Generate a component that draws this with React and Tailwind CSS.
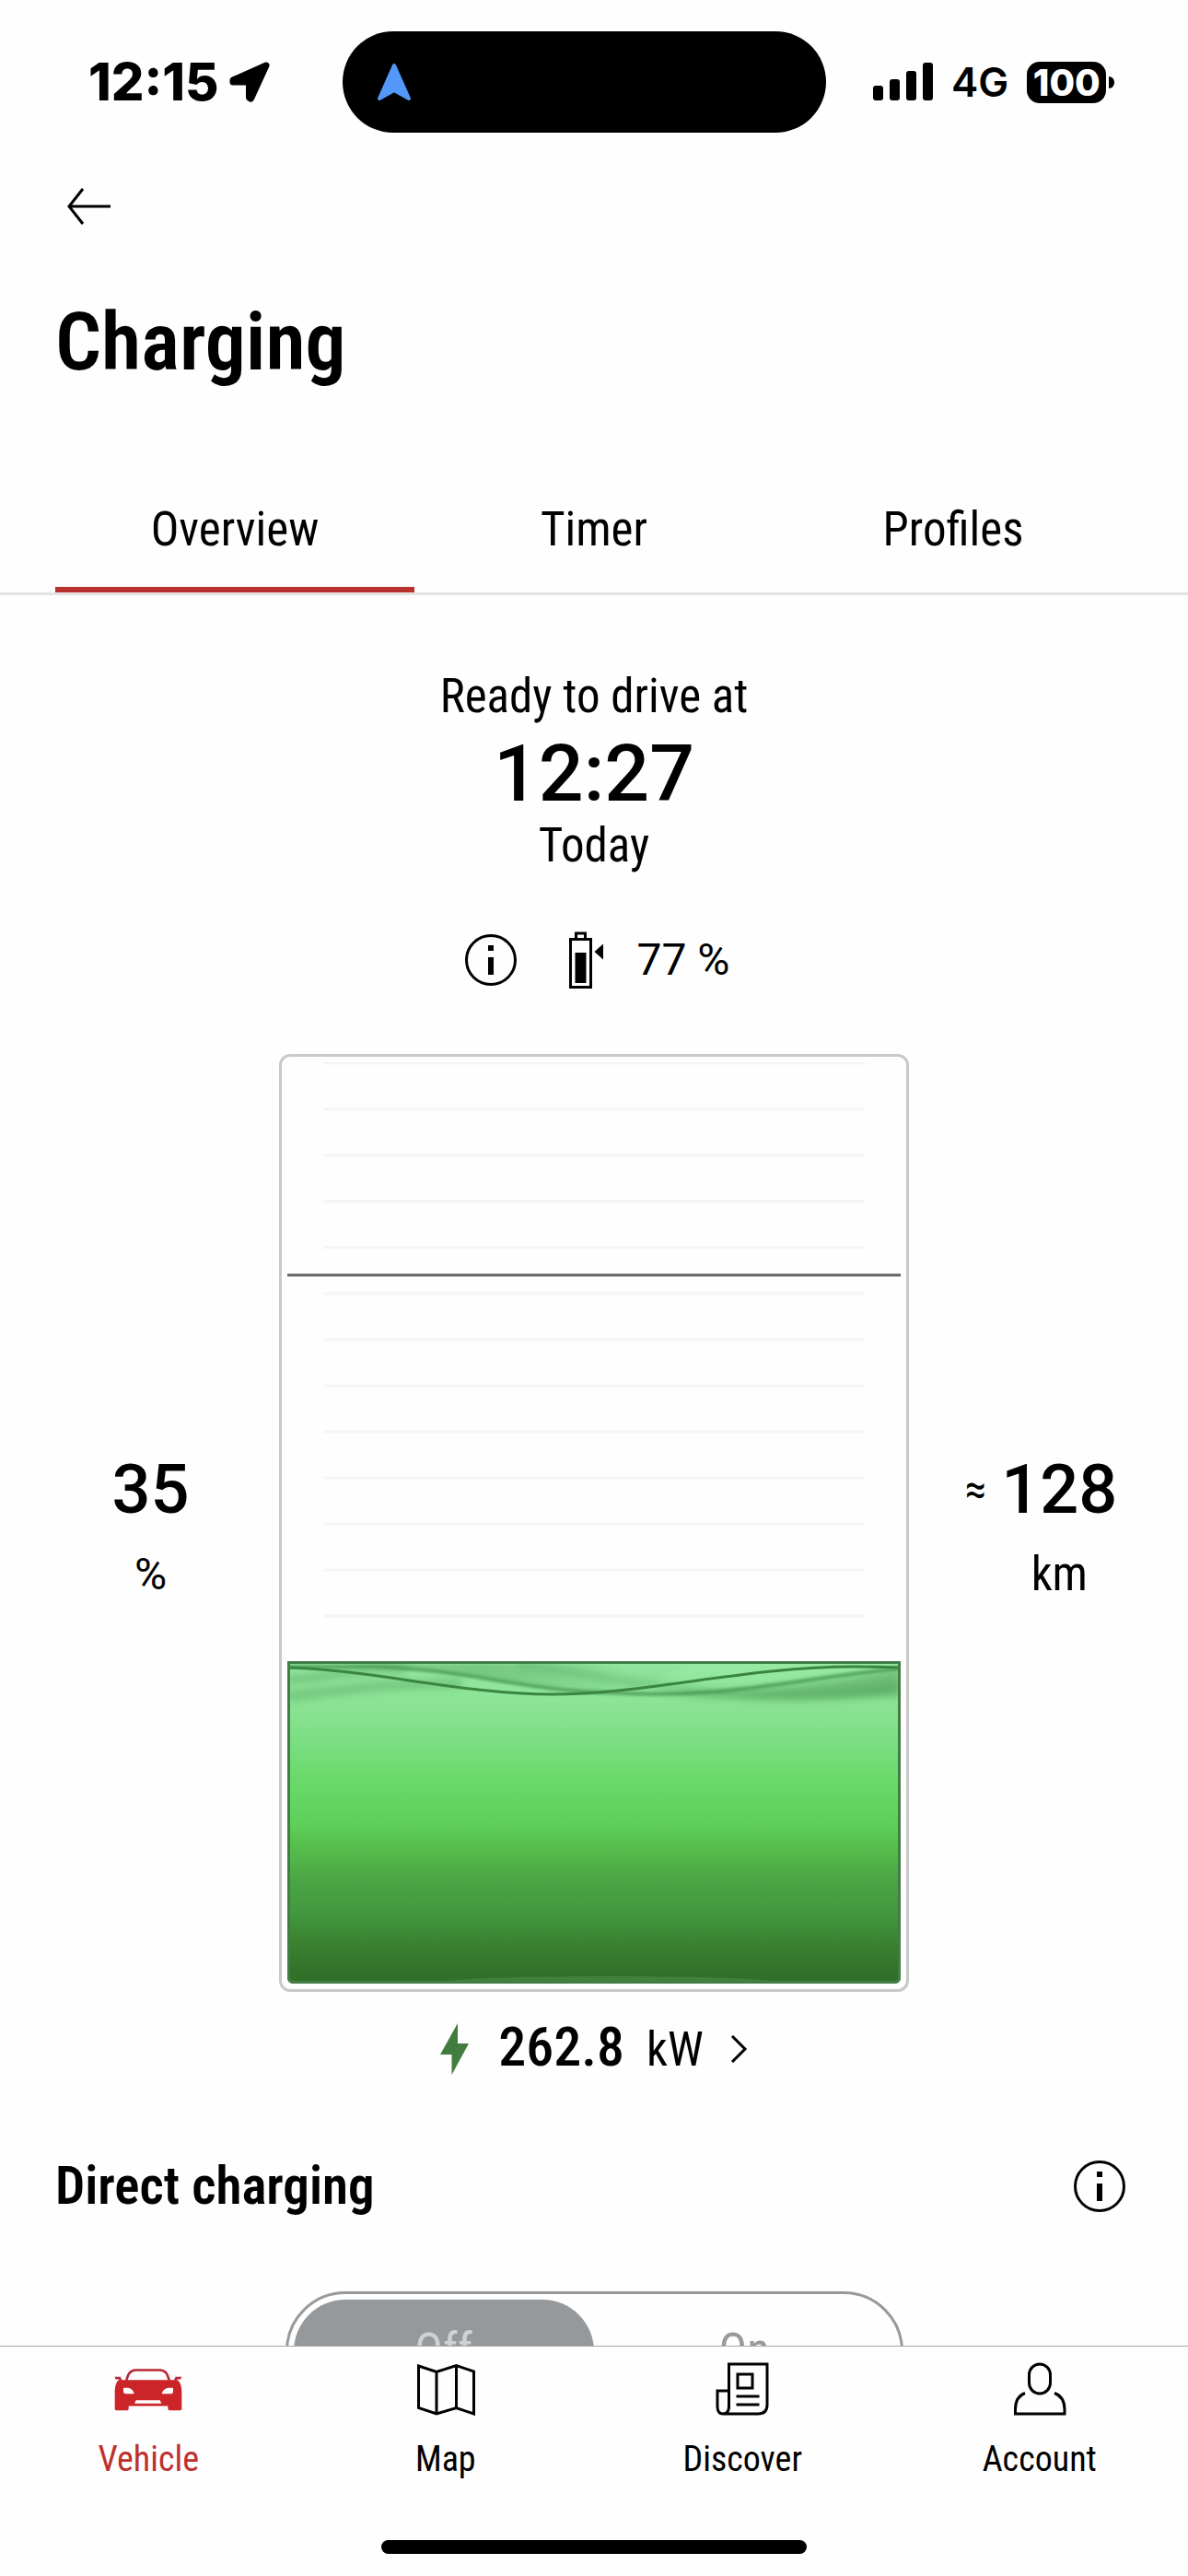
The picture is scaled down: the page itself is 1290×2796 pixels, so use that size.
import React, { useState } from 'react';

const TABS = ['Overview', 'Timer', 'Profiles'];

const NAV_ITEMS = [
  { label: 'Vehicle', Icon: CarIcon },
  { label: 'Map', Icon: MapIcon },
  { label: 'Discover', Icon: NewsIcon },
  { label: 'Account', Icon: UserIcon },
];

function CarIcon() {
  return (
    <svg viewBox="46 45 222 140" className="w-[74px] h-[47px]" aria-hidden="true">
      <path d="M86 86C91 62 99 53 116 52H195C212 53 220 62 225 86" fill="none" stroke="#b52a35" strokeWidth="8" />
      <path d="M48 74H66L72 86H64L61 82H50ZM266 74H246L240 86H248L252 82H262Z" fill="#b52a35" />
      <path
        fillRule="evenodd"
        fill="#cb2529"
        d="M60 84H252C262 92 266 105 266 125V178Q266 183 261 183H227Q221 183 221 178V169H93V178Q93 183 88 183H53Q48 183 48 178V125C48 105 52 92 60 84ZM76 110H92Q106 112 111 129H82Q76 129 76 122ZM238 110H222Q206 112 201 129H232Q238 129 238 122ZM117 150H195L200 161H112Z"
      />
    </svg>
  );
}

function MapIcon() {
  return (
    <svg viewBox="0 0 64 58" className="w-16 h-[58px]" fill="none" stroke="currentColor" strokeWidth="3" aria-hidden="true">
      <path d="M2.5 4L22 10.5L43.5 3.5L62.5 10V56L43.5 49.5L22 56L2.5 49.5ZM22 10.5V56M43.5 3.5V49.5" />
    </svg>
  );
}

function NewsIcon() {
  return (
    <svg viewBox="0 0 60 60" className="w-[60px] h-[60px]" fill="none" stroke="currentColor" strokeWidth="3" aria-hidden="true">
      <path d="M15.5 51V3H57V47Q57 57 47 57H9Q3 57 3 49V32H15.5M9 57Q15.5 57 15.5 49" />
      <rect x="25" y="14" width="16" height="15" />
      <path d="M23.5 38H48.5M23.5 47H48.5" />
    </svg>
  );
}

function UserIcon() {
  return (
    <svg viewBox="0 0 60 60" className="w-[60px] h-[60px]" fill="none" stroke="currentColor" strokeWidth="3" aria-hidden="true">
      <rect x="18.5" y="3" width="23" height="32" rx="11.5" />
      <path d="M14 34.5C6 37.5 3.5 44 3.5 52V57H57V52C57 44 54 37.5 46 34.5" />
    </svg>
  );
}

function InfoIcon() {
  return (
    <svg viewBox="0 0 72 72" className="w-[72px] h-[72px]" aria-hidden="true">
      <circle cx="36" cy="36" r="26.5" fill="none" stroke="currentColor" strokeWidth="3" />
      <path d="M33 20h6v6h-6zM33 33h6v19h-6z" fill="currentColor" />
    </svg>
  );
}

function TargetBatteryIcon() {
  return (
    <svg viewBox="0 0 38 64" className="w-[38px] h-16" aria-hidden="true">
      <path d="M2.5 9.5H24.5V61.5H2.5ZM8.5 9.5V3H18.5V9.5" fill="none" stroke="currentColor" strokeWidth="3" />
      <path d="M7.5 24h12v33h-12zM28.5 23L38 14.5V31.5Z" fill="currentColor" />
    </svg>
  );
}

function StatusBar() {
  return (
    <div className="grid grid-cols-[372px_1fr_393px] items-center pt-[34px] font-[Inter,sans-serif]">
      <div className="flex items-center gap-3 pl-[96px]">
        <span className="text-[56px] leading-[64px] font-extrabold">12:15</span>
        <svg viewBox="0 0 44 44" className="w-11 h-11" aria-hidden="true">
          <path d="M40 4L4 20V22H21.5V39L23.5 40Z" stroke="#000" strokeWidth="7" strokeLinejoin="round" />
        </svg>
      </div>
      <div className="flex items-center h-[110px] rounded-full bg-black pl-[37px]">
        <svg viewBox="0 0 38 42" className="w-[38px] h-[42px]" aria-hidden="true">
          <path d="M19 3L35 39L19 30L3 39Z" fill="#5398f9" stroke="#5398f9" strokeWidth="4" strokeLinejoin="round" />
        </svg>
      </div>
      <div className="flex items-center pl-[51px]">
        <svg viewBox="0 0 65 42" className="w-[65px] h-[42px]" aria-hidden="true">
          <rect x="0" y="25" width="11" height="16" rx="3" />
          <rect x="18" y="18" width="11" height="23" rx="3" />
          <rect x="36" y="9" width="11" height="32" rx="3" />
          <rect x="54" y="0" width="11" height="41" rx="3" />
        </svg>
        <span className="ml-5 text-[44px] leading-[48px] font-semibold">4G</span>
        <span className="ml-5 w-[86px] h-[45px] rounded-[14px] bg-black text-white text-center text-[40px] leading-[45px] font-extrabold">100</span>
        <span className="ml-[3px] w-[6px] h-[13px] rounded-r-full bg-black" />
      </div>
    </div>
  );
}

// Drawn on a 1000 unit high canvas so 1 % of charge is 10 units
function ChargeGauge({ level, target }) {
  const marks = Array.from({ length: Math.ceil((100 - level) / 5) }, (_, i) => i * 50 + 1);
  const top = 1000 - level * 10;
  return (
    <div className="border-[3px] border-[#c9c9c9] rounded-xl p-1.5">
      <svg viewBox="0 0 666 1000" className="block w-full" role="img" aria-label={`Charged to ${level} %`}>
        <defs>
          <linearGradient id="charge" x1="0" y1="0" x2="0" y2="1">
            <stop offset="0" stopColor="#97e9a3" />
            <stop offset="0.14" stopColor="#8ae393" />
            <stop offset="0.27" stopColor="#78dd80" />
            <stop offset="0.37" stopColor="#69d969" />
            <stop offset="0.5" stopColor="#5fd15a" />
            <stop offset="0.58" stopColor="#56bd4c" />
            <stop offset="0.68" stopColor="#4aa544" />
            <stop offset="0.78" stopColor="#43983f" />
            <stop offset="0.88" stopColor="#3a8030" />
            <stop offset="0.97" stopColor="#307029" />
          </linearGradient>
          <linearGradient id="shade" x1="0" y1="0" x2="1" y2="0">
            <stop offset="0" stopColor="#3d8a45" stopOpacity="0.2" />
            <stop offset="0.4" stopColor="#3d8a45" stopOpacity="0.35" />
            <stop offset="0.8" stopColor="#3d8a45" stopOpacity="0.05" />
          </linearGradient>
          <filter id="soft" x="-5%" y="-50%" width="110%" height="200%">
            <feGaussianBlur stdDeviation="1.5" />
          </filter>
          <filter id="softer" x="-5%" y="-50%" width="110%" height="200%">
            <feGaussianBlur stdDeviation="4" />
          </filter>
          <clipPath id="tank">
            <path d={`M0 ${top}H666V993Q666 1000 659 1000H7Q0 1000 0 993Z`} />
          </clipPath>
        </defs>
        {marks.map(y => (
          <path key={y} d={`M39 ${y}H627`} stroke="#f5f5f5" strokeWidth="3" />
        ))}
        <path d={`M0 ${1001 - target * 10}H666`} stroke="#666" strokeWidth="3" />
        <g clipPath="url(#tank)">
          <rect y={top} width="666" height={level * 10} fill="url(#charge)" />
          <g transform={`translate(0 ${top})`} fill="none">
            <path d="M60 3C180 6 240 26 345 34C420 28 400 12 440 3Z" fill="url(#shade)" filter="url(#soft)" />
            <g filter="url(#softer)">
              <path d="M250 4C340 14 440 40 560 39C610 38 640 32 666 28" stroke="#3d8a45" strokeOpacity="0.3" strokeWidth="8" />
              <path d="M411 36C500 34 590 24 666 8V38C600 42 480 42 411 36Z" fill="#3d8a45" fillOpacity="0.45" />
              <path d="M0 38C60 32 100 24 190 24M0 20C40 18 60 10 130 8" stroke="#3d8a45" strokeOpacity="0.35" strokeWidth="10" />
            </g>
            <path d="M0 6H90C190 8 260 32 345 34C480 42 540 20 666 8" stroke="#3d8a45" strokeOpacity="0.7" strokeWidth="4" filter="url(#soft)" />
            <path d="M0 7C90 9 190 36 288 36S500 6 615 6Q642 6 666 7" stroke="#3a853f" strokeWidth="3" />
          </g>
          <ellipse cx="350" cy="1000" rx="190" ry="8" fill="#42813d" />
        </g>
        <path
          d={`M1.5 ${top + 1.5}H664.5V993Q664.5 998.5 659 998.5H7Q1.5 998.5 1.5 993Z`}
          fill="none"
          stroke="#417d45"
          strokeWidth="3"
        />
      </svg>
    </div>
  );
}

function DirectCharging() {
  const [on, setOn] = useState(false);
  const active = 'bg-[#96999b] text-[#cfd1d3]';
  const idle = 'text-[#999999]';
  return (
    <section className="mt-20">
      <div className="flex items-center justify-between px-[60px]">
        <h2 className="text-[57px] leading-[64px] font-semibold">Direct charging</h2>
        <button type="button" aria-label="About direct charging">
          <InfoIcon />
        </button>
      </div>
      <div className="flex w-[671px] mx-auto mt-[78px] p-1.5 border-[3px] border-[#999999] rounded-full">
        <button
          type="button"
          aria-pressed={!on}
          onClick={() => setOn(false)}
          className={`flex-1 h-28 rounded-full text-[51px] leading-[60px] ${on ? idle : active}`}
        >
          Off
        </button>
        <button
          type="button"
          aria-pressed={on}
          onClick={() => setOn(true)}
          className={`flex-1 h-28 rounded-full text-[51px] leading-[60px] ${on ? active : idle}`}
        >
          On
        </button>
      </div>
    </section>
  );
}

export default function App() {
  const [tab, setTab] = useState('Overview');
  const [page, setPage] = useState('Vehicle');

  return (
    <div className="h-screen flex flex-col bg-[#fefefe] text-black font-['Roboto_Condensed',Roboto,sans-serif]">
      <main className="flex-1 min-h-0 overflow-hidden">
        <StatusBar />

        <header className="mt-14">
          <button type="button" aria-label="Back" className="block ml-[72px]">
            <svg viewBox="0 0 48 48" className="w-12 h-12" fill="none" stroke="currentColor" strokeWidth="3" aria-hidden="true">
              <path d="M48 24H3M18 5L3 24L18 43" />
            </svg>
          </button>
          <h1 className="mt-[71px] px-[60px] text-[88px] leading-[104px] font-semibold">Charging</h1>
        </header>

        <div role="tablist" className="flex mt-24 px-[60px] border-b-[3px] border-[#e3e3e3]">
          {TABS.map(t => (
            <button
              key={t}
              type="button"
              role="tab"
              aria-selected={t === tab}
              onClick={() => setTab(t)}
              className={`flex-1 pt-[26px] pb-8 border-b-[6px] text-[51px] leading-[60px] ${t === tab ? 'border-[#b9322f]' : 'border-transparent'}`}
            >
              {t}
            </button>
          ))}
        </div>

        <section className="mt-20 text-center">
          <p className="text-[51px] leading-[60px]">Ready to drive at</p>
          <p className="text-[86px] leading-[108px] font-medium font-[Roboto,sans-serif]">12:27</p>
          <p className="text-[51px] leading-[48px]">Today</p>
        </section>

        <div className="flex items-center justify-center mt-16">
          <button type="button" aria-label="About target charge">
            <InfoIcon />
          </button>
          <span className="ml-12"><TargetBatteryIcon /></span>
          <span className="ml-9 text-[48px] leading-[60px] font-[Roboto,sans-serif]">77 %</span>
        </div>

        <div className="grid grid-cols-[1fr_684px_1fr] items-center mt-[66px] px-[60px]">
          <div className="pr-9 flex flex-col gap-3 text-center">
            <span className="text-[74px] leading-[100px] font-medium font-[Roboto,sans-serif]">35</span>
            <span className="text-[48px] leading-[60px] font-[Roboto,sans-serif]">%</span>
          </div>
          <ChargeGauge level={35} target={77} />
          <div className="pl-11 flex justify-center gap-4">
            <span className="text-[48px] leading-[100px]">≈</span>
            <div className="flex flex-col gap-3 text-center">
              <span className="text-[74px] leading-[100px] font-medium font-[Roboto,sans-serif]">128</span>
              <span className="text-[51px] leading-[60px]">km</span>
            </div>
          </div>
        </div>

        <button type="button" className="flex items-center mx-auto mt-7">
          <svg viewBox="0 0 31 56" className="w-[31px] h-14" aria-hidden="true">
            <path d="M19 0V22H31L12.500 56V34H0Z" fill="#417d3f" />
          </svg>
          <span className="ml-8 flex items-baseline gap-6">
            <span className="text-[60px] leading-[64px] font-medium">262.8</span>
            <span className="text-[51px] leading-[64px]">kW</span>
          </span>
          <svg viewBox="0 0 20 30" className="ml-7 w-5 h-[30px]" fill="none" stroke="currentColor" strokeWidth="3" aria-hidden="true">
            <path d="M3 1L17 15L3 29" />
          </svg>
        </button>

        <DirectCharging />
      </main>

      <nav className="border-t border-[#a8a8a8] pb-6">
        <div className="grid grid-cols-4 pt-4">
          {NAV_ITEMS.map(({ label, Icon }) => (
            <button
              key={label}
              type="button"
              onClick={() => setPage(label)}
              className={`flex flex-col items-center gap-6 ${label === page ? 'text-[#bf302d]' : ''}`}
            >
              <span className="flex h-[60px] items-center"><Icon /></span>
              <span className="text-[38px] leading-[44px]">{label}</span>
            </button>
          ))}
        </div>
        <div className="w-[462px] h-[15px] mx-auto mt-[66px] rounded-full bg-black" />
      </nav>
    </div>
  );
}
